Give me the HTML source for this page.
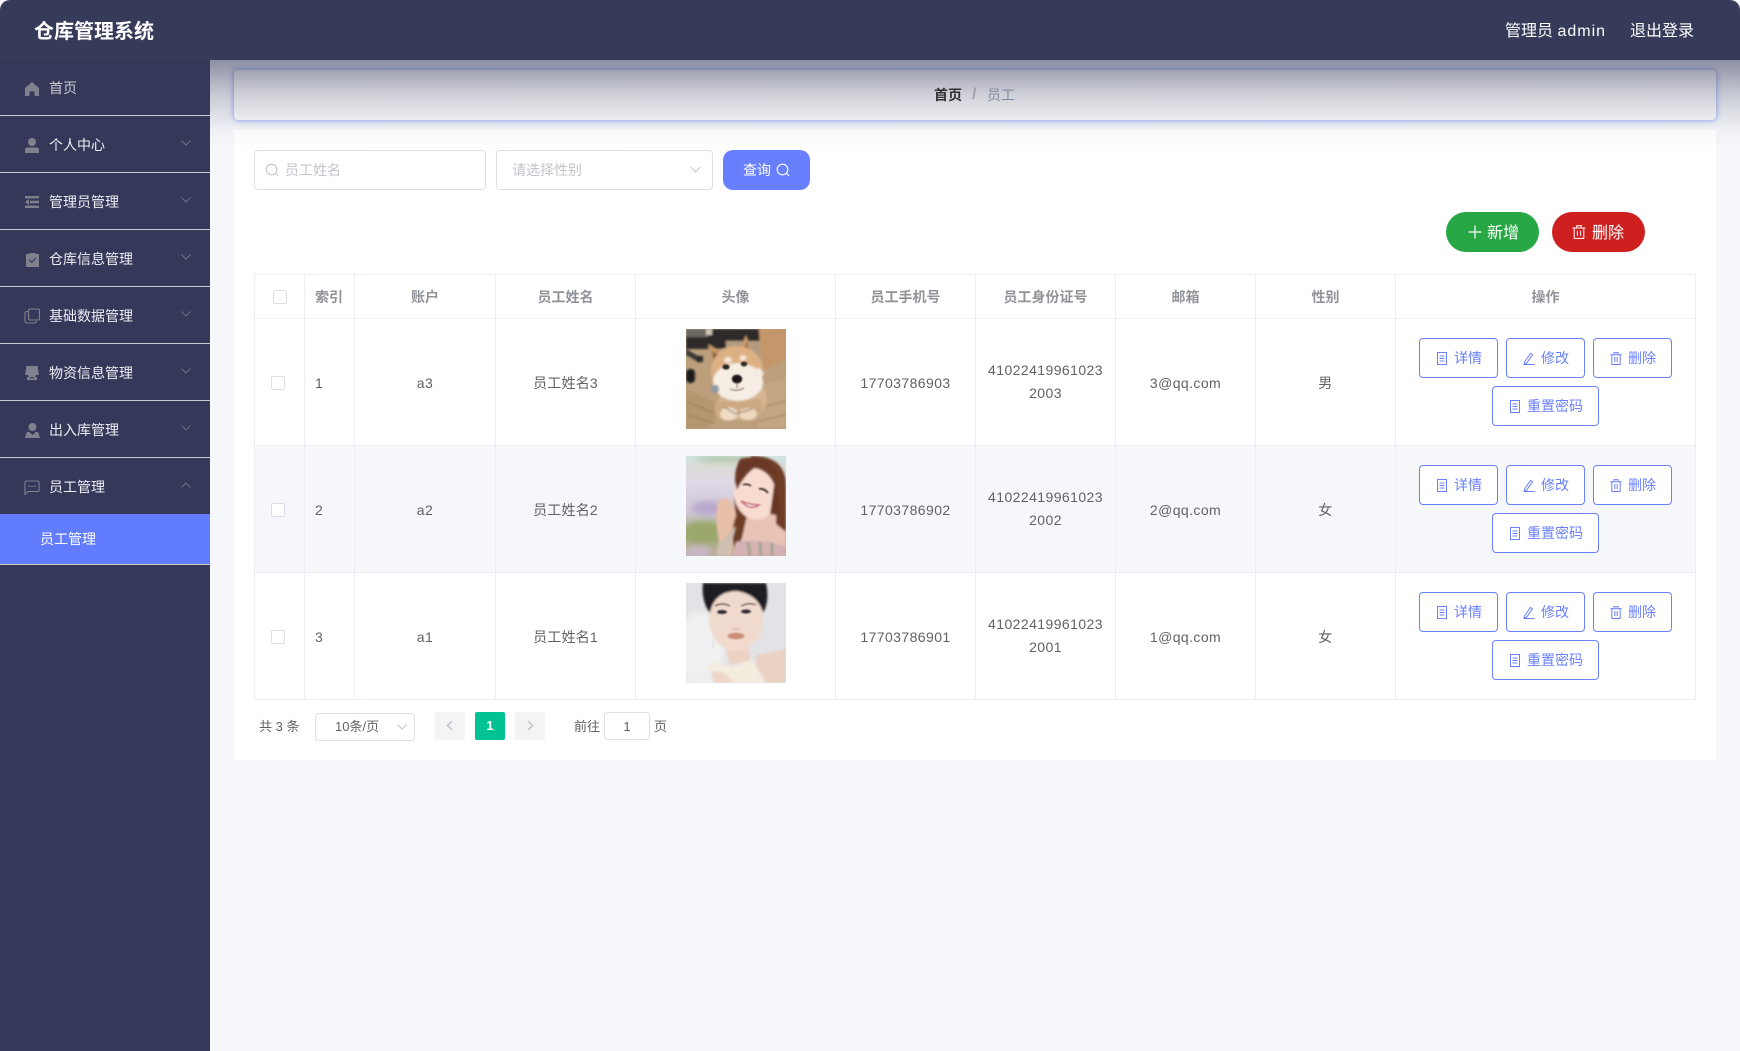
<!DOCTYPE html>
<html lang="zh"><head><meta charset="utf-8"><title>仓库管理系统</title>
<style>
*{box-sizing:border-box;margin:0;padding:0}
html,body{width:1740px;height:1051px;overflow:hidden;background:#fff;font-family:"Liberation Sans","Noto Sans CJK SC",sans-serif;font-size:14px;color:#606266}
.a{position:absolute}
.t{position:absolute;white-space:nowrap;line-height:20px;height:20px}
#main{position:absolute;left:0;top:0;width:1740px;height:1051px;background:#f5f7fa}
#head{position:absolute;left:0;top:0;width:1740px;height:60px;background:#373b5a;border-radius:10px 10px 0 0}
#side{position:absolute;left:0;top:60px;width:210px;height:991px;background:#353859}
.ln{position:absolute;left:0;width:210px;height:1px;background:#c9c9cf}
.m{color:#eceef4;left:49px}
.ic{position:absolute;fill:#7f818f;stroke:none}
.chev{position:absolute;left:181px;fill:none;stroke:#6f7183;stroke-width:1}
#crumb{position:absolute;left:234px;top:70px;width:1482px;height:50px;background:#fff;border-radius:4px;box-shadow:0 0 6px rgba(95,120,255,.75)}
#panel{position:absolute;left:234px;top:130px;width:1482px;height:630px;background:#fff}
#shade{position:absolute;left:210px;top:60px;width:1530px;height:90px;background:linear-gradient(to bottom,rgba(55,59,90,.54),rgba(55,59,90,.47) 11%,rgba(55,59,90,.235) 39%,rgba(55,59,90,.09) 67%,rgba(55,59,90,.03) 78%,rgba(55,59,90,0))}
.box{position:absolute;border:1px solid #dcdfe6;border-radius:4px;background:#fff}
.ph{color:#c0c4cc}
.pill{position:absolute;top:212px;height:40px;border-radius:20px;color:#fff}
.v{position:absolute;width:1px;background:#ebeef5;top:274px;height:425px}
.h{position:absolute;left:254px;width:1442px;height:1px;background:#ebeef5}
.c{text-align:center;position:absolute;white-space:nowrap;line-height:20px;height:20px;letter-spacing:.42px}
.th{font-weight:700;color:#909399;text-align:center;position:absolute;top:287px;line-height:20px;height:20px;letter-spacing:0}
.cb{position:absolute;width:14px;height:14px;background:#fff;border:1px solid #dcdfe6;border-radius:2px}
.btn{position:absolute;height:40px;border:1px solid #6a80ff;border-radius:4px;background:#fff;color:#6a80ff}
.btn span{position:absolute;top:9px;line-height:20px;white-space:nowrap}
.btn svg{position:absolute;top:13px;fill:none;stroke:#6a80ff;stroke-width:1}
.pg{position:absolute;top:712px;width:30px;height:28px;background:#f4f4f5;border-radius:2px}
</style></head><body>
<div id="main">
<div id="crumb"></div>
<div id="panel"></div>

<div class="box" style="left:254px;top:150px;width:232px;height:40px"></div>
<svg class="a" style="left:265px;top:163px" width="14" height="14" viewBox="0 0 14 14" fill="none" stroke="#c0c4cc" stroke-width="1.1"><circle cx="6.5" cy="6.5" r="5.3"/><path d="M10.4 10.4L13 13"/></svg>
<div class="t ph" style="left:285px;top:160px">员工姓名</div>
<div class="box" style="left:496px;top:150px;width:217px;height:40px"></div>
<div class="t ph" style="left:512px;top:160px">请选择性别</div>
<svg class="a" style="left:690px;top:166px" width="11" height="7" viewBox="0 0 11 7" fill="none" stroke="#c0c4cc" stroke-width="1"><path d="M.5.8L5.5 6 10.5.8"/></svg>
<div class="a" style="left:723px;top:150px;width:87px;height:40px;background:#6880ff;border-radius:10px"></div>
<div class="t" style="left:743px;top:160px;color:#fff">查询</div>
<svg class="a" style="left:776px;top:163px" width="14" height="14" viewBox="0 0 14 14" fill="none" stroke="#fff" stroke-width="1.1"><circle cx="6.5" cy="6.5" r="5.3"/><path d="M10.4 10.4L13 13"/></svg>

<div class="pill" style="left:1446px;width:93px;background:#28a745"></div>
<svg class="a" style="left:1468px;top:225px" width="14" height="14" viewBox="0 0 14 14" fill="none" stroke="#fff" stroke-width="1.2"><path d="M7 .5v13M.5 7h13"/></svg>
<div class="t" style="left:1487px;top:224px;color:#fff;font-size:16px">新增</div>
<div class="pill" style="left:1552px;width:93px;background:#cf2020"></div>
<svg class="a" style="left:1572px;top:225px" width="14" height="14" viewBox="0 0 14 14" fill="none" stroke="#fff" stroke-width="1"><path d="M.5 3h13M2.2 3v10.4h9.6V3M4.7 3V.8h4.600V3M5.400 5.700v5M8.600 5.700v5"/></svg>
<div class="t" style="left:1592px;top:224px;color:#fff;font-size:16px">删除</div>

<!-- table -->
<div class="a" style="left:254px;top:445px;width:1442px;height:127px;background:#f5f7fa"></div>
<div class="h" style="top:274px"></div><div class="h" style="top:318px"></div><div class="h" style="top:445px"></div><div class="h" style="top:572px"></div><div class="h" style="top:699px"></div>
<div class="v" style="left:254px"></div><div class="v" style="left:304px"></div><div class="v" style="left:354px"></div><div class="v" style="left:495px"></div><div class="v" style="left:635px"></div><div class="v" style="left:835px"></div><div class="v" style="left:975px"></div><div class="v" style="left:1115px"></div><div class="v" style="left:1255px"></div><div class="v" style="left:1395px"></div><div class="v" style="left:1695px"></div>

<div class="cb" style="left:273px;top:290px"></div>
<div class="th" style="left:315px">索引</div>
<div class="th" style="left:355px;width:140px">账户</div>
<div class="th" style="left:496px;width:139px">员工姓名</div>
<div class="th" style="left:636px;width:199px">头像</div>
<div class="th" style="left:836px;width:139px">员工手机号</div>
<div class="th" style="left:976px;width:139px">员工身份证号</div>
<div class="th" style="left:1116px;width:139px">邮箱</div>
<div class="th" style="left:1256px;width:139px">性别</div>
<div class="th" style="left:1396px;width:299px">操作</div>

<!-- row 1 -->
<div class="cb" style="left:271px;top:376px"></div>
<div class="t" style="left:315px;top:373px">1</div>
<div class="c" style="left:355px;width:140px;top:373px">a3</div>
<div class="c" style="left:496px;width:139px;top:373px;letter-spacing:.2px">员工姓名3</div>
<svg class="a" style="left:686px;top:329px" width="100" height="100" viewBox="0 0 100 100">
<defs><filter id="b1" x="-20%" y="-20%" width="140%" height="140%"><feGaussianBlur stdDeviation="1.1"/></filter>
<filter id="b2" x="-20%" y="-20%" width="140%" height="140%"><feGaussianBlur stdDeviation=".7"/></filter>
<filter id="b3" x="-30%" y="-30%" width="160%" height="160%"><feGaussianBlur stdDeviation="3"/></filter>
<clipPath id="cp"><rect width="100" height="100"/></clipPath></defs>
<g clip-path="url(#cp)">
<rect width="100" height="100" fill="#bd9f7c"/>
<g filter="url(#b1)">
<path d="M0 0H78V14L48 18 30 20 0 20Z" fill="#2f2c2a"/>
<path d="M0 0H22V8H0Z" fill="#6c675f"/><rect x="20" y="0" width="6" height="6" fill="#cfc6b8"/>
<path d="M40 12H75V30H40Z" fill="#b39b80"/>
<path d="M73 0H100V28L78 42 74 20Z" fill="#c59669"/>
<path d="M0 20L14 28V34L0 26Z" fill="#3a3835"/>
<rect x="0" y="40" width="9" height="14" rx="4" fill="#1d1d1f"/><rect x="11" y="27" width="6" height="6" fill="#2b2b2e"/>
<path d="M0 60L40 78 20 100H0Z" fill="#b5966f"/><path d="M70 55L100 50V100H72Z" fill="#c3a582"/>
<path d="M0 72L30 85M0 86L28 94M68 80L100 72M72 92L100 86" stroke="#9c7c5c" stroke-width="1" fill="none"/>
<ellipse cx="57" cy="70" rx="24" ry="21" fill="#d6b591"/>
<path d="M30 72Q25 92 40 92L52 88 64 92Q78 90 76 70Z" fill="#cda983"/>
<ellipse cx="43" cy="85" rx="9" ry="6.5" fill="#f0dcc5"/><ellipse cx="62" cy="85" rx="9" ry="6" fill="#eed8c0"/>
<path d="M38 78L50 85 66 80" stroke="#6e5c4c" stroke-width="1" fill="none"/>
<path d="M22 15L37 24 28 38Z" fill="#c89a6c"/><path d="M26 22L32 26 28 32Z" fill="#7d5a42"/>
<path d="M60 6L68 30 52 24Z" fill="#c89a6c"/><path d="M61 13L64 26 57 23Z" fill="#8a6850"/>
<ellipse cx="51" cy="42" rx="26" ry="25" fill="#dcb083"/>
<ellipse cx="52" cy="53" rx="25" ry="19" fill="#f6eee5"/>
<ellipse cx="42" cy="31" rx="4" ry="3" fill="#f6e6d4"/><ellipse cx="57" cy="29" rx="3.5" ry="3" fill="#f6e6d4"/>
<path d="M72 38L78 44 72 56 66 50Z" fill="#f5ece2"/>
<rect x="25" y="56" width="8" height="8" rx="3" fill="#8f99a2"/>
</g>
<g filter="url(#b2)">
<ellipse cx="40" cy="38" rx="3.6" ry="2.6" fill="#28211d"/><ellipse cx="58" cy="35" rx="3.2" ry="2.4" fill="#28211d"/>
<ellipse cx="51" cy="50" rx="5.2" ry="4.4" fill="#1a1617"/>
<path d="M51 54V59M44 60Q51 63 58 59" stroke="#6a5448" stroke-width=".8" fill="none"/>
</g></g></svg>
<div class="c" style="left:836px;width:139px;top:373px">17703786903</div>
<div class="c" style="left:976px;width:139px;top:360px">41022419961023</div>
<div class="c" style="left:976px;width:139px;top:383px">2003</div>
<div class="c" style="left:1116px;width:139px;top:373px">3@qq.com</div>
<div class="c" style="left:1256px;width:139px;top:373px">男</div>

<!-- row 2 -->
<div class="cb" style="left:271px;top:503px"></div>
<div class="t" style="left:315px;top:500px">2</div>
<div class="c" style="left:355px;width:140px;top:500px">a2</div>
<div class="c" style="left:496px;width:139px;top:500px;letter-spacing:.2px">员工姓名2</div>
<svg class="a" style="left:686px;top:456px" width="100" height="100" viewBox="0 0 100 100">
<defs><linearGradient id="g2" x1="0" y1="0" x2="0" y2="1"><stop offset="0" stop-color="#cfe4e0"/><stop offset=".1" stop-color="#d9dcd6"/><stop offset=".25" stop-color="#e0d9e6"/><stop offset=".55" stop-color="#cfc6d6"/><stop offset=".8" stop-color="#a6b082"/><stop offset="1" stop-color="#b9ac98"/></linearGradient>
<clipPath id="cq"><rect width="100" height="100"/></clipPath></defs>
<g clip-path="url(#cq)">
<rect width="100" height="100" fill="url(#g2)"/>
<g filter="url(#b3)"><ellipse cx="18" cy="76" rx="22" ry="11" fill="#9aa76a"/><ellipse cx="22" cy="52" rx="16" ry="7" fill="#b8a8cc"/><ellipse cx="12" cy="96" rx="14" ry="6" fill="#c8b8c8"/><ellipse cx="40" cy="3" rx="30" ry="3" fill="#b4c4a8"/></g>
<g filter="url(#b1)">
<path d="M33 44Q48 38 50 60L45 100H30L33 85Q28 60 33 44Z" fill="#e8bfa8"/>
<path d="M66 0Q100 0 100 30V100H58L52 100Q42 80 50 60 44 25 56 8Z" fill="#6e3c28"/>
<path d="M50 70L42 100H30L32 88Z" fill="#cdbfb0"/>
<path d="M62 55L90 50 90 68 100 76V100H48L56 82Z" fill="#e9c3b6"/>
<path d="M50 86Q70 82 100 90V100H46Z" fill="#d6b1b3"/>
<path d="M62 86L64 100M74 86L75 100M86 87L86 100" stroke="#86a07c" stroke-width="2"/>
<ellipse cx="69" cy="38" rx="21" ry="26" fill="#f9dcd0" transform="rotate(-12 69 38)"/>
<path d="M54 3Q82 -4 92 20 82 16 72 10 60 16 51 34 46 18 54 3Z" fill="#6a3826"/>
<path d="M89 22L95 60 84 58Z" fill="#683624"/>
</g>
<g filter="url(#b2)">
<path d="M57 29Q61 27 65 30" stroke="#3a2a26" stroke-width="1.6" fill="none"/>
<path d="M73 33Q78 32 82 37" stroke="#3a2a26" stroke-width="1.8" fill="none"/>
<path d="M55 45Q64 55 73 49Q64 49 55 45Z" fill="#fff" stroke="#c9707c" stroke-width="1.6"/>
</g></g></svg>
<div class="c" style="left:836px;width:139px;top:500px">17703786902</div>
<div class="c" style="left:976px;width:139px;top:487px">41022419961023</div>
<div class="c" style="left:976px;width:139px;top:510px">2002</div>
<div class="c" style="left:1116px;width:139px;top:500px">2@qq.com</div>
<div class="c" style="left:1256px;width:139px;top:500px">女</div>

<!-- row 3 -->
<div class="cb" style="left:271px;top:630px"></div>
<div class="t" style="left:315px;top:627px">3</div>
<div class="c" style="left:355px;width:140px;top:627px">a1</div>
<div class="c" style="left:496px;width:139px;top:627px;letter-spacing:.2px">员工姓名1</div>
<svg class="a" style="left:686px;top:583px" width="100" height="100" viewBox="0 0 100 100">
<defs><clipPath id="cr"><rect width="100" height="100"/></clipPath></defs>
<g clip-path="url(#cr)">
<rect width="100" height="100" fill="#e3e3e7"/>
<g filter="url(#b3)"><ellipse cx="14" cy="65" rx="24" ry="36" fill="#f1f1f3"/></g>
<g filter="url(#b1)">
<path d="M70 72L100 66V100H70Z" fill="#e9d2c4"/>
<path d="M38 55H62L64 78 44 82Z" fill="#ecd2c2"/>
<ellipse cx="50" cy="36" rx="27" ry="32" fill="#f0dace"/>
<path d="M17 0H80Q84 18 77 30 72 11 50 8 28 9 24 30 15 18 17 0Z" fill="#1f1b22"/>
<path d="M24 78L46 84 66 76 80 100H10Z" fill="#f3ecdf"/>
<path d="M22 90Q36 84 48 100H18Z" fill="#efd6c8"/>
<path d="M0 90L24 86 28 100H0Z" fill="#eeeef0"/>
</g>
<g filter="url(#b2)">
<path d="M29 23Q36 19 44 23" stroke="#6b5148" stroke-width="1.2" fill="none"/><path d="M55 23Q63 19 70 22" stroke="#6b5148" stroke-width="1.2" fill="none"/>
<ellipse cx="36" cy="29" rx="5" ry="2" fill="#362c32"/><ellipse cx="60" cy="28.5" rx="5" ry="2" fill="#362c32"/>
<path d="M46 45Q50 48 54 45" stroke="#c8a090" stroke-width="1" fill="none"/>
<ellipse cx="50" cy="53" rx="8.5" ry="3.2" fill="#c98d78"/>
<path d="M28 50L27 66M75 44L74 60" stroke="#e6e0dc" stroke-width="1.4"/>
</g></g></svg>
<div class="c" style="left:836px;width:139px;top:627px">17703786901</div>
<div class="c" style="left:976px;width:139px;top:614px">41022419961023</div>
<div class="c" style="left:976px;width:139px;top:637px">2001</div>
<div class="c" style="left:1116px;width:139px;top:627px">1@qq.com</div>
<div class="c" style="left:1256px;width:139px;top:627px">女</div>

<!-- buttons row 1 -->
<div class="btn" style="left:1419px;top:338px;width:79px"><svg style="left:16px" width="12" height="13" viewBox="0 0 12 13"><path d="M1.5.5h9v12h-9zM3.5 4h5M3.5 6.5h5M3.5 9h5"/></svg><span style="left:34px">详情</span></div>
<div class="btn" style="left:1506px;top:338px;width:79px"><svg style="left:16px" width="12" height="13" viewBox="0 0 12 13"><path d="M1.5 10L7.5 1.5l2 1.4L3.5 11.3l-2.3.7zM.5 12.5h11"/></svg><span style="left:34px">修改</span></div>
<div class="btn" style="left:1593px;top:338px;width:79px"><svg style="left:16px" width="12" height="13" viewBox="0 0 12 13"><path d="M.3 2.8h11.4M1.8 2.8v9.7h8.4V2.8M4 2.8V.6h4v2.2M4.8 5v5M7.2 5v5"/></svg><span style="left:34px">删除</span></div>
<div class="btn" style="left:1492px;top:386px;width:107px"><svg style="left:16px" width="12" height="13" viewBox="0 0 12 13"><path d="M1.5.5h9v12h-9zM3.5 4h5M3.5 6.5h5M3.5 9h5"/></svg><span style="left:34px">重置密码</span></div>
<!-- buttons row 2 -->
<div class="btn" style="left:1419px;top:465px;width:79px"><svg style="left:16px" width="12" height="13" viewBox="0 0 12 13"><path d="M1.5.5h9v12h-9zM3.5 4h5M3.5 6.5h5M3.5 9h5"/></svg><span style="left:34px">详情</span></div>
<div class="btn" style="left:1506px;top:465px;width:79px"><svg style="left:16px" width="12" height="13" viewBox="0 0 12 13"><path d="M1.5 10L7.5 1.5l2 1.4L3.5 11.3l-2.3.7zM.5 12.5h11"/></svg><span style="left:34px">修改</span></div>
<div class="btn" style="left:1593px;top:465px;width:79px"><svg style="left:16px" width="12" height="13" viewBox="0 0 12 13"><path d="M.3 2.8h11.4M1.8 2.8v9.7h8.4V2.8M4 2.8V.6h4v2.2M4.8 5v5M7.2 5v5"/></svg><span style="left:34px">删除</span></div>
<div class="btn" style="left:1492px;top:513px;width:107px"><svg style="left:16px" width="12" height="13" viewBox="0 0 12 13"><path d="M1.5.5h9v12h-9zM3.5 4h5M3.5 6.5h5M3.5 9h5"/></svg><span style="left:34px">重置密码</span></div>
<!-- buttons row 3 -->
<div class="btn" style="left:1419px;top:592px;width:79px"><svg style="left:16px" width="12" height="13" viewBox="0 0 12 13"><path d="M1.5.5h9v12h-9zM3.5 4h5M3.5 6.5h5M3.5 9h5"/></svg><span style="left:34px">详情</span></div>
<div class="btn" style="left:1506px;top:592px;width:79px"><svg style="left:16px" width="12" height="13" viewBox="0 0 12 13"><path d="M1.5 10L7.5 1.5l2 1.4L3.5 11.3l-2.3.7zM.5 12.5h11"/></svg><span style="left:34px">修改</span></div>
<div class="btn" style="left:1593px;top:592px;width:79px"><svg style="left:16px" width="12" height="13" viewBox="0 0 12 13"><path d="M.3 2.8h11.4M1.8 2.8v9.7h8.4V2.8M4 2.8V.6h4v2.2M4.8 5v5M7.2 5v5"/></svg><span style="left:34px">删除</span></div>
<div class="btn" style="left:1492px;top:640px;width:107px"><svg style="left:16px" width="12" height="13" viewBox="0 0 12 13"><path d="M1.5.5h9v12h-9zM3.5 4h5M3.5 6.5h5M3.5 9h5"/></svg><span style="left:34px">重置密码</span></div>

<!-- pagination -->
<div class="t" style="left:259px;top:717px;font-size:13px">共 3 条</div>
<div class="box" style="left:315px;top:713px;width:100px;height:28px"></div>
<div class="t" style="left:335px;top:717px;font-size:13px">10条/页</div>
<svg class="a" style="left:397px;top:724px" width="10" height="6" viewBox="0 0 10 6" fill="none" stroke="#c0c4cc"><path d="M.5.5L5 5 9.5.5"/></svg>
<div class="pg" style="left:435px"></div>
<svg class="a" style="left:446px;top:720px" width="7" height="11" viewBox="0 0 7 11" fill="none" stroke="#c0c4cc" stroke-width="1.5"><path d="M6 1L1.5 5.5 6 10"/></svg>
<div class="pg" style="left:475px;background:#00c292"></div>
<div class="t" style="left:475px;top:716px;width:30px;text-align:center;color:#fff;font-weight:700;font-size:13px">1</div>
<div class="pg" style="left:515px"></div>
<svg class="a" style="left:527px;top:720px" width="7" height="11" viewBox="0 0 7 11" fill="none" stroke="#c0c4cc" stroke-width="1.5"><path d="M1 1l4.500 4.500L1 10"/></svg>
<div class="t" style="left:574px;top:717px;font-size:13px">前往</div>
<div class="box" style="left:604px;top:712px;width:46px;height:28px"></div>
<div class="t" style="left:604px;top:717px;width:46px;text-align:center;font-size:13px">1</div>
<div class="t" style="left:654px;top:717px;font-size:13px">页</div>

<div id="shade"></div>
<div class="t" style="left:934px;top:85px;font-weight:700;color:#303133">首页</div>
<div class="t" style="left:972px;top:85px;color:#a0a1aa;font-weight:700;font-size:16px">/</div>
<div class="t" style="left:987px;top:85px;color:#7f8b9e">员工</div>

<div id="head"></div>
<div class="t" style="left:34px;top:18px;height:28px;line-height:28px;font-size:20px;font-weight:700;color:#fff">仓库管理系统</div>
<div class="t" style="left:1505px;top:22px;font-size:16px;color:#fff">管理员 <span style="letter-spacing:1px">admin</span></div>
<div class="t" style="left:1630px;top:22px;font-size:16px;color:#fff">退出登录</div>

<div id="side"></div>
<div class="ln" style="top:115px"></div><div class="ln" style="top:172px"></div><div class="ln" style="top:229px"></div><div class="ln" style="top:286px"></div><div class="ln" style="top:343px"></div><div class="ln" style="top:400px"></div><div class="ln" style="top:457px"></div>
<div class="a" style="left:0;top:514px;width:210px;height:50px;background:#617cff"></div>
<div class="ln" style="top:564px"></div>

<svg class="ic" style="left:25px;top:82px" width="14" height="14" viewBox="0 0 14 14"><path d="M7 0L14 6V14H9.5V9.5h-5V14H0V6Z"/></svg>
<svg class="ic" style="left:25px;top:138px" width="14" height="15" viewBox="0 0 14 15"><circle cx="7" cy="4" r="4"/><path d="M0 15V12Q0 9.500 3 9.500H11Q14 9.500 14 12V15Z"/></svg>
<svg class="ic" style="left:25px;top:196px" width="14" height="12" viewBox="0 0 14 12"><path d="M0 0h14v2.400H0zM0 9.600h14V12H0zM5 4.800h9v2.400H5zM4 3v6L0 6Z"/></svg>
<svg class="ic" style="left:26px;top:252px" width="13" height="15" viewBox="0 0 13 15"><path d="M0 2h3.500V1h6v1H13v13H0z"/><path d="M3.500 8l2.300 2.300L9.800 6" fill="none" stroke="#353859" stroke-width="1.2"/></svg>
<svg class="a" style="left:24px;top:308px" width="16" height="16" viewBox="0 0 16 16" fill="none" stroke="#7f818f" stroke-width="1.1"><rect x="4.500" y="1" width="11" height="11" rx="1.500"/><path d="M4.500 3.500H3Q1 3.500 1 5.500V13Q1 15 3 15H10.500Q12.500 15 12.500 13"/></svg>
<svg class="ic" style="left:25px;top:366px" width="14" height="14" viewBox="0 0 14 14"><path d="M1.500 0H12.500L14 9H11L10 11H4L3 9H0Z"/><path d="M2 11h3l.5 1.500h3L9 11h3v3H2z"/></svg>
<svg class="ic" style="left:25px;top:423px" width="15" height="15" viewBox="0 0 15 15"><circle cx="7.500" cy="4" r="4"/><path d="M0 15L1.500 10Q2 9 4 8.800L7.500 12 11 8.800Q13 9 13.500 10L15 15Z"/></svg>
<svg class="a" style="left:24px;top:480px" width="16" height="15" viewBox="0 0 16 15" fill="none" stroke="#7f818f" stroke-width="1.1"><path d="M2.500 1h11Q15 1 15 2.500V10Q15 11.500 13.500 11.500H4L1 14.500V2.500Q1 1 2.500 1Z"/><path d="M4.500 6.300h1.500M7.300 6.300h1.500M10 6.300h1.500" stroke-width="1.300"/></svg>

<div class="t" style="left:49px;top:78px;color:#c9cad2">首页</div>
<div class="t m" style="top:135px">个人中心</div>
<div class="t m" style="top:192px">管理员管理</div>
<div class="t m" style="top:249px">仓库信息管理</div>
<div class="t m" style="top:306px">基础数据管理</div>
<div class="t m" style="top:363px">物资信息管理</div>
<div class="t m" style="top:420px">出入库管理</div>
<div class="t m" style="top:477px">员工管理</div>
<div class="t" style="left:40px;top:529px;color:#fff">员工管理</div>

<svg class="chev" style="top:140px" width="10" height="6" viewBox="0 0 10 6"><path d="M.5.500L5 5 9.500.500"/></svg>
<svg class="chev" style="top:197px" width="10" height="6" viewBox="0 0 10 6"><path d="M.5.500L5 5 9.500.500"/></svg>
<svg class="chev" style="top:254px" width="10" height="6" viewBox="0 0 10 6"><path d="M.5.500L5 5 9.500.500"/></svg>
<svg class="chev" style="top:311px" width="10" height="6" viewBox="0 0 10 6"><path d="M.5.500L5 5 9.500.500"/></svg>
<svg class="chev" style="top:368px" width="10" height="6" viewBox="0 0 10 6"><path d="M.5.500L5 5 9.500.500"/></svg>
<svg class="chev" style="top:425px" width="10" height="6" viewBox="0 0 10 6"><path d="M.5.500L5 5 9.500.500"/></svg>
<svg class="chev" style="top:482px" width="10" height="6" viewBox="0 0 10 6"><path d="M.5 5.500L5 1 9.500 5.500"/></svg>
</div>
</body></html>
